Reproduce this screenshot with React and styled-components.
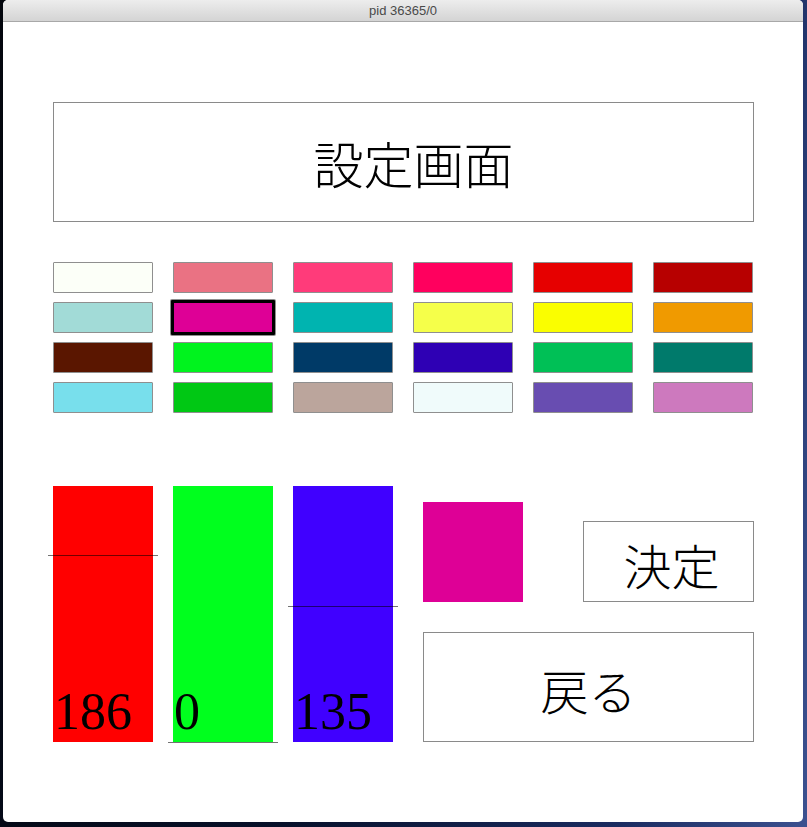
import React from 'react';
import styled, { createGlobalStyle } from 'styled-components';

const Global = createGlobalStyle`
  html, body { margin: 0; padding: 0; }
  body {
    width: 807px;
    height: 827px;
    overflow: hidden;
    background: linear-gradient(100deg, #03060d 0%, #07102a 45%, #1a2b60 80%, #3c5190 100%);
    font-family: "Liberation Sans", sans-serif;
  }
`;

const Desktop = styled.div`
  box-sizing: border-box;
  height: 827px;
  padding: 0 4px 5px 3px;
`;

const Window = styled.div`
  width: 800px;
  height: 822px;
  background: #fff;
  border-radius: 5px;
  overflow: hidden;
  display: flex;
  flex-direction: column;
`;

const TitleBar = styled.div`
  flex: none;
  height: 21px;
  border-bottom: 1px solid #a8a8a8;
  background: linear-gradient(#ededed, #d4d4d4);
  display: flex;
  align-items: center;
  justify-content: center;
  font-size: 13px;
  color: #4a4a4a;
`;

const Content = styled.div`
  padding: 80px 0 0 50px;
  display: flex;
  flex-direction: column;
`;

const jp = `"Noto Sans CJK JP", "Liberation Serif", serif`;

const Heading = styled.div`
  box-sizing: border-box;
  width: 701px;
  height: 120px;
  border: 1px solid #8a8a8a;
  display: flex;
  align-items: center;
  justify-content: center;
  font-family: ${jp};
  font-weight: 300;
  font-size: 50px;
  color: #000;
  padding-left: 20px;
`;

const Palette = styled.div`
  margin-top: 40px;
  display: grid;
  grid-template-columns: repeat(6, 100px);
  grid-auto-rows: 31px;
  column-gap: 20px;
  row-gap: 9px;
`;

const Swatch = styled.div`
  box-sizing: border-box;
  background: ${(p) => p.$color};
  border: ${(p) => (p.$selected ? '3px solid #000' : '1px solid #8f8f8f')};
  margin: ${(p) => (p.$selected ? '-2px' : '0')};
  box-shadow: ${(p) => (p.$selected ? '0 0 0 1px #8f8f8f' : 'none')};
  border-radius: 1px;
`;

const Lower = styled.div`
  margin-top: 73px;
  display: flex;
`;

const Bars = styled.div`
  display: flex;
  gap: 20px;
`;

const Bar = styled.div`
  position: relative;
  width: 100px;
  height: 256px;
  background: ${(p) => p.$color};
  display: flex;
  align-items: flex-end;
`;

const Marker = styled.div`
  position: absolute;
  left: -5px;
  right: -5px;
  height: 1px;
  background: rgba(0, 0, 0, 0.55);
`;

const Value = styled.div`
  margin: 0 0 4px 1px;
  font-family: "Liberation Serif", serif;
  font-size: 52px;
  line-height: 52px;
  color: #000;
`;

const Side = styled.div`
  margin-left: 30px;
  width: 331px;
  padding-top: 16px;
  display: flex;
  flex-direction: column;
  gap: 30px;
`;

const SideTop = styled.div`
  display: flex;
  align-items: flex-end;
  justify-content: space-between;
`;

const Preview = styled.div`
  width: 100px;
  height: 100px;
  background: ${(p) => p.$color};
`;

const Button = styled.div`
  box-sizing: border-box;
  width: ${(p) => p.$w}px;
  height: ${(p) => p.$h}px;
  border: 1px solid #8a8a8a;
  display: flex;
  align-items: center;
  justify-content: center;
  padding-left: ${(p) => p.$shift || 0}px;
  padding-top: 4px;
  font-family: ${jp};
  font-weight: 300;
  font-size: 48px;
  color: #000;
`;

const palette = [
  '#fcfff8', '#ea7283', '#ff3b7a', '#ff005e', '#e60000', '#b70000',
  '#a2dbd7', '#de0096', '#00b4b0', '#f5ff4a', '#fafe00', '#f09a00',
  '#5a1600', '#00f31e', '#003a67', '#2e00b4', '#00c056', '#007a6b',
  '#78dfec', '#00c814', '#bba59c', '#f0fbfb', '#684db1', '#cd79be',
];

const channels = [
  { color: '#ff0000', value: 186 },
  { color: '#00ff1e', value: 0 },
  { color: '#4000ff', value: 135 },
];

export default function App() {
  const selected = 7;
  return (
    <>
      <Global />
      <Desktop>
        <Window>
          <TitleBar>pid 36365/0</TitleBar>
          <Content>
            <Heading>設定画面</Heading>
            <Palette>
              {palette.map((c, i) => (
                <Swatch key={i} $color={c} $selected={i === selected} />
              ))}
            </Palette>
            <Lower>
              <Bars>
                {channels.map((ch, i) => (
                  <Bar key={i} $color={ch.color}>
                    <Marker style={{ top: `${((255 - ch.value) / 255) * 256}px` }} />
                    <Value>{ch.value}</Value>
                  </Bar>
                ))}
              </Bars>
              <Side>
                <SideTop>
                  <Preview $color={palette[selected]} />
                  <Button $w={171} $h={81} $shift={6}>決定</Button>
                </SideTop>
                <Button $w={331} $h={110}>戻る</Button>
              </Side>
            </Lower>
          </Content>
        </Window>
      </Desktop>
    </>
  );
}
